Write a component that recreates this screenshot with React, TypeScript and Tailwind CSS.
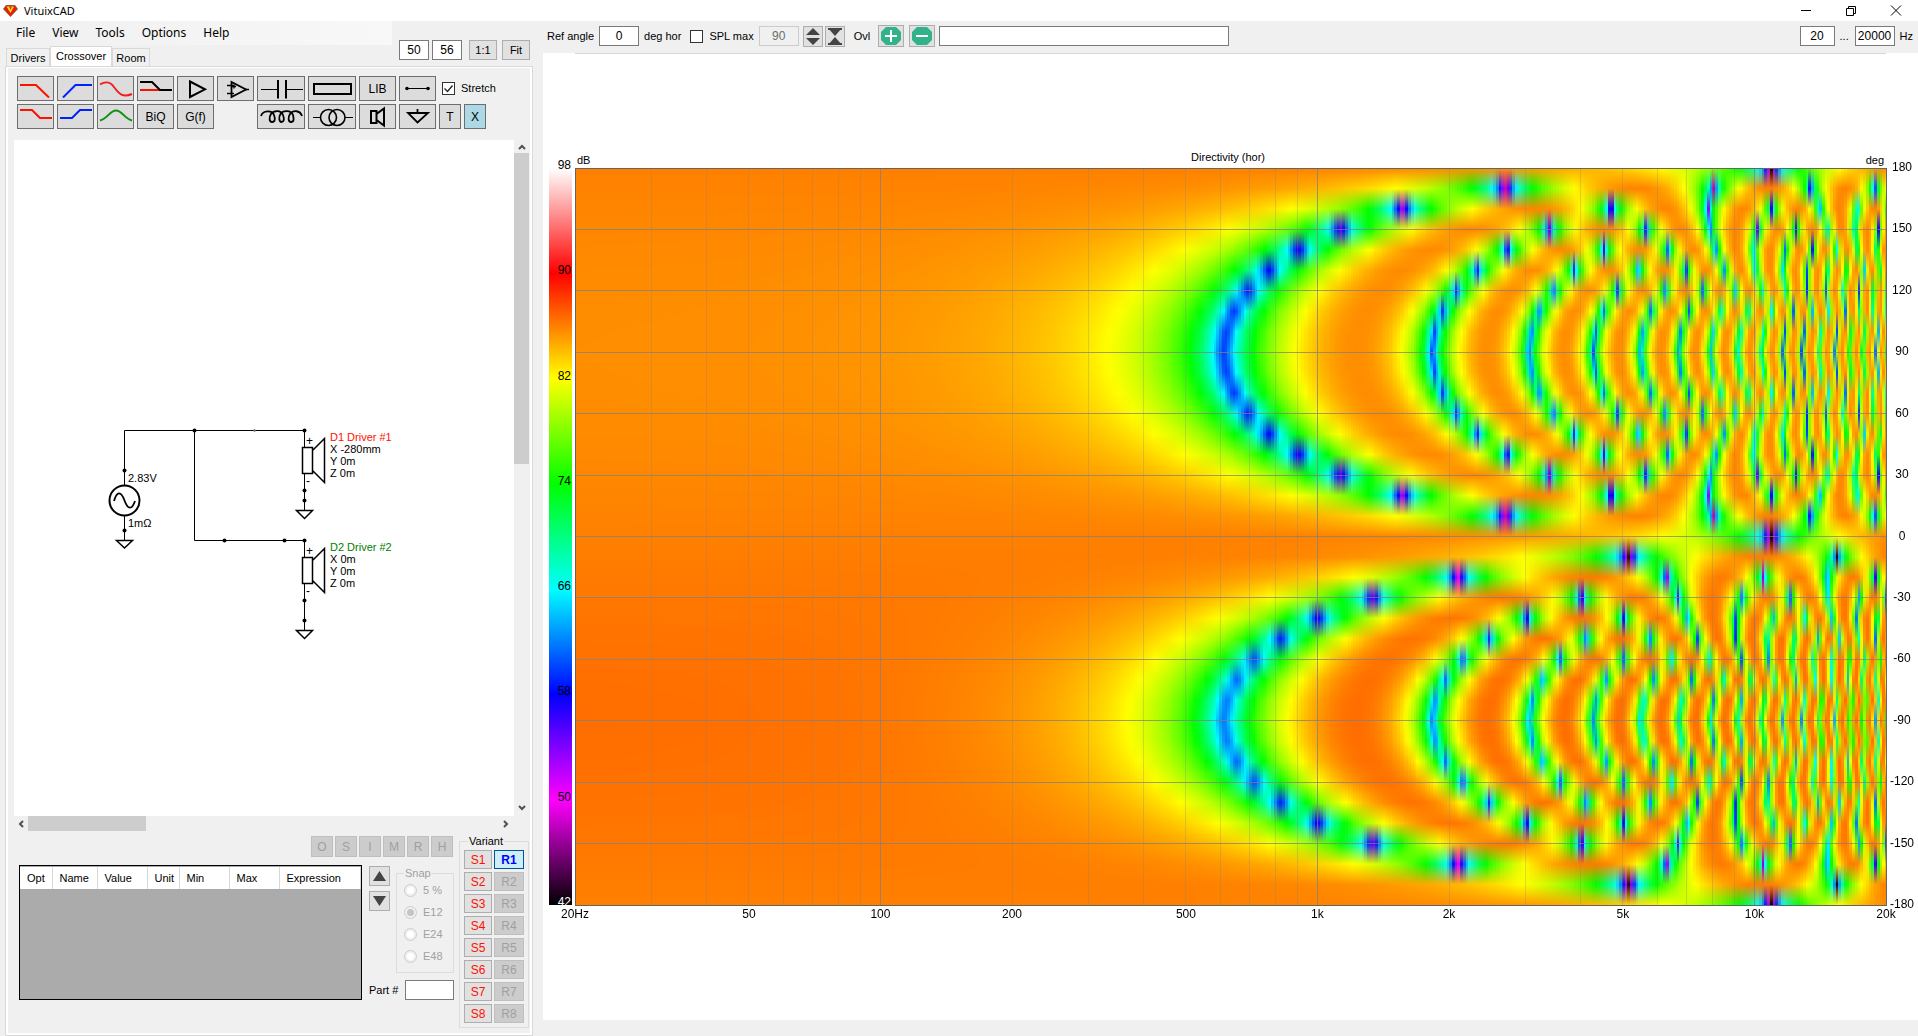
import { useEffect, useRef } from "react";
import type { ReactNode } from "react";
import clsx from "clsx";

const MIN_FREQ = 20;
const MAX_FREQ = 20000;
const STEPS_PER_OCTAVE = 48;
const ANGLE_STEP = 10;
const SPEED_OF_SOUND = 344;
const DISTANCE = 2.5;
const LEVEL_AT_DISTANCE = 80;
const DRIVER_POSITIONS = [-0.28, 0];

// 42 dB -> 98 dB, 8 dB between stops
const COLOR_STOPS = [
  [0, 0, 0],
  [255, 0, 255],
  [0, 0, 255],
  [0, 255, 255],
  [0, 255, 0],
  [255, 255, 0],
  [255, 0, 0],
  [255, 255, 255],
];

function levelToColor(level: number) {
  const position = Math.min(Math.max((level - 42) / 8, 0), 6.9999);
  const index = Math.floor(position);
  const ratio = position - index;
  return COLOR_STOPS[index].map(
    (channel, i) => channel + (COLOR_STOPS[index + 1][i] - channel) * ratio,
  );
}

function getLevel(freq: number, angle: number) {
  const rad = (angle * Math.PI) / 180;
  const x = DISTANCE * Math.sin(rad);
  const z = DISTANCE * Math.cos(rad);
  let re = 0;
  let im = 0;
  for (const position of DRIVER_POSITIONS) {
    const distance = Math.hypot(x - position, z);
    const phase = (2 * Math.PI * freq * distance) / SPEED_OF_SOUND;
    re += (DISTANCE / distance) * Math.cos(phase);
    im += (DISTANCE / distance) * Math.sin(phase);
  }
  return LEVEL_AT_DISTANCE + 20 * Math.log10(Math.hypot(re, im) + 1e-9);
}

function drawDirectivity(canvas: HTMLCanvasElement) {
  const width = canvas.clientWidth;
  const height = canvas.clientHeight;
  const context = canvas.getContext("2d");
  if (!context || !width || !height) return;
  canvas.width = width;
  canvas.height = height;

  const image = context.createImageData(width, height);
  const totalSteps = Math.log2(MAX_FREQ / MIN_FREQ) * STEPS_PER_OCTAVE;
  let lastStep = -1;
  let column: number[][] = [];

  for (let x = 0; x < width; x++) {
    const step = Math.ceil(((x + 0.5) / width) * totalSteps);
    if (step !== lastStep) {
      const freq = MIN_FREQ * 2 ** (step / STEPS_PER_OCTAVE);
      column = Array.from({ length: 360 / ANGLE_STEP + 1 }, (_, i) =>
        levelToColor(getLevel(freq, 180 - i * ANGLE_STEP)),
      );
      lastStep = step;
    }
    for (let y = 0; y < height; y++) {
      const row = ((y + 0.5) / height) * (column.length - 1);
      const index = Math.floor(row);
      const ratio = row - index;
      const offset = (y * width + x) * 4;
      for (let c = 0; c < 3; c++) {
        image.data[offset + c] =
          column[index][c] * (1 - ratio) + column[index + 1][c] * ratio;
      }
      image.data[offset + 3] = 255;
    }
  }
  context.putImageData(image, 0, 0);
}

const freqToPercent = (freq: number) =>
  `${(Math.log10(freq / MIN_FREQ) / Math.log10(MAX_FREQ / MIN_FREQ)) * 100}%`;
const angleToPercent = (angle: number) => `${((180 - angle) / 360) * 100}%`;

const FREQ_LINES = [10, 100, 1000, 10000]
  .flatMap((decade) => [1, 2, 3, 4, 5, 6, 7, 8, 9].map((n) => n * decade))
  .filter((freq) => freq > MIN_FREQ && freq < MAX_FREQ);
const ANGLES = [180, 150, 120, 90, 60, 30, 0, -30, -60, -90, -120, -150, -180];
const FREQ_LABELS: [number, string][] = [
  [20, "20Hz"],
  [50, "50"],
  [100, "100"],
  [200, "200"],
  [500, "500"],
  [1000, "1k"],
  [2000, "2k"],
  [5000, "5k"],
  [10000, "10k"],
  [20000, "20k"],
];
const LEVELS = [98, 90, 82, 74, 66, 58, 50, 42];

function DirectivityChart() {
  const canvasRef = useRef<HTMLCanvasElement>(null);

  useEffect(() => {
    const canvas = canvasRef.current;
    if (!canvas) return;
    const draw = () => drawDirectivity(canvas);
    draw();
    window.addEventListener("resize", draw);
    return () => window.removeEventListener("resize", draw);
  }, []);

  return (
    <section className="flex min-h-0 flex-1 flex-col bg-white pr-8 pb-[115px] pl-[6px]">
      <div className="ml-[26px] border-[#d8d8d8] border-t" />
      <div className="mt-[98px] ml-[26px] flex h-4 items-start justify-between px-[2px] leading-4">
        <span>dB</span>
        <h2 className="-mt-[3px]">Directivity (hor)</h2>
        <span>deg</span>
      </div>
      <div className="flex min-h-0 flex-1 gap-[3px]">
        <div className="w-[23px] bg-[linear-gradient(to_bottom,#fff,#f00,#ff0,#0f0,#0ff,#00f,#f0f,#000)]">
          <svg className="size-full overflow-visible">
            {LEVELS.map((level) => (
              <text
                key={level}
                x="22"
                y={`${((98 - level) / 56) * 100}%`}
                dy="1"
                textAnchor="end"
                className={clsx(
                  "text-[12px]",
                  level === 42 ? "fill-white" : "fill-black",
                )}
              >
                {level}
              </text>
            ))}
          </svg>
        </div>
        <div className="relative min-w-0 flex-1">
          <canvas ref={canvasRef} className="absolute inset-0 size-full" />
          <svg
            className="absolute inset-0 size-full overflow-visible"
            shapeRendering="crispEdges"
          >
            {FREQ_LINES.map((freq) => (
              <line
                key={freq}
                x1={freqToPercent(freq)}
                x2={freqToPercent(freq)}
                y1="0"
                y2="100%"
                stroke="#808080"
                strokeOpacity={[100, 1000, 10000].includes(freq) ? 0.75 : 0.28}
              />
            ))}
            {ANGLES.map((angle) => (
              <line
                key={angle}
                x1="0"
                x2="100%"
                y1={angleToPercent(angle)}
                y2={angleToPercent(angle)}
                stroke="#808080"
                strokeOpacity={0.75}
              />
            ))}
            <rect
              width="100%"
              height="100%"
              fill="none"
              stroke="#646464"
            />
            {FREQ_LABELS.map(([freq, label]) => (
              <text
                key={freq}
                x={freqToPercent(freq)}
                y="100%"
                dy="13"
                textAnchor="middle"
                className="text-[12px]"
              >
                {label}
              </text>
            ))}
            {ANGLES.map((angle) => (
              <text
                key={`label_${angle}`}
                x="100%"
                y={angleToPercent(angle)}
                dx="16"
                dy="3"
                textAnchor="middle"
                className="text-[12px]"
              >
                {angle}
              </text>
            ))}
          </svg>
        </div>
      </div>
    </section>
  );
}

type BoxProps = {
  label: string;
  value?: string;
  disabled?: boolean;
  className?: string;
};

function TextBox({ label, value = "", disabled, className }: BoxProps) {
  return (
    <input
      aria-label={label}
      defaultValue={value}
      disabled={disabled}
      className={clsx(
        "h-5 border px-0 text-center text-[12px]",
        disabled
          ? "border-[#cccccc] bg-[#f0f0f0] text-[#6d6d6d]"
          : "border-[#7a7a7a] bg-white",
        className,
      )}
    />
  );
}

function CheckBox({ label, checked }: { label: string; checked?: boolean }) {
  return (
    <label className="flex items-center gap-[6px]">
      <span className="relative size-[13px]">
        <input
          type="checkbox"
          defaultChecked={checked}
          className="peer block size-[13px] appearance-none border border-[#333333] bg-white"
        />
        <svg
          viewBox="0 0 13 13"
          className="pointer-events-none absolute inset-0 hidden size-[13px] peer-checked:block"
        >
          <path d="M2.5 6.5l3 3 5-6" fill="none" stroke="#222" strokeWidth="1.3" />
        </svg>
      </span>
      {label}
    </label>
  );
}

type ToolButtonProps = {
  label: string;
  wide?: boolean;
  narrow?: boolean;
  active?: boolean;
  children: ReactNode;
};

function ToolButton({ label, wide, narrow, active, children }: ToolButtonProps) {
  return (
    <button
      type="button"
      aria-label={label}
      className={clsx(
        "flex h-[25px] items-center justify-center border border-[#6e6e6e]",
        wide ? "w-12" : narrow ? "w-[22px]" : "w-[37px]",
        active ? "bg-[#add8e6]" : "bg-[#dcdcdc]",
      )}
    >
      {children}
    </button>
  );
}

type GlyphProps = { d: string; color?: string; stroke?: number; width?: number };

function Glyph({ d, color = "#000", stroke = 2, width = 37 }: GlyphProps) {
  return (
    <svg
      width={width - 2}
      height="23"
      viewBox={`1 1 ${width - 2} 23`}
      fill="none"
      stroke={color}
      strokeWidth={stroke}
    >
      <path d={d} />
    </svg>
  );
}

function CrossoverToolbar() {
  return (
    <div className="flex h-[72px] flex-col gap-[3px] pt-2 pl-[9px] text-[12px]">
      <div className="flex items-center gap-[3px]">
        <ToolButton label="Low pass">
          <Glyph d="M3 9H19L32 21.500" color="#f10" />
        </ToolButton>
        <ToolButton label="High pass">
          <Glyph d="M6 21.500L18.500 9H35" color="#02f" />
        </ToolButton>
        <ToolButton label="All pass">
          <Glyph d="M3 8.500C7 6 13 5 17 11C22 18 26 22 35 18" color="#f12020" />
        </ToolButton>
        <ToolButton label="Delay">
          <svg width="35" height="23" viewBox="1 1 35 23" fill="none" strokeWidth="2">
            <path d="M3 14H23" stroke="#f10" />
            <path d="M3 6H15L23 14H35" stroke="#000" />
          </svg>
        </ToolButton>
        <ToolButton label="Buffer">
          <Glyph d="M13 5.500V21L28 13.300Z" />
        </ToolButton>
        <ToolButton label="Op amp">
          <svg width="35" height="23" viewBox="1 1 35 23" fill="none" stroke="#000">
            <path d="M14.500 6V21L29 13.500Z" strokeWidth="1.800" />
            <path d="M10 9.500H17M10 17.500H17M28 13.500H32M15 10.500H19M17 8.500V12.500" strokeWidth="1.300" />
          </svg>
        </ToolButton>
        <ToolButton label="Capacitor" wide>
          <svg width="46" height="23" viewBox="1 1 46 23" fill="none" stroke="#000">
            <path d="M4 13.500H21M29 13.500H46" />
            <path d="M21 4V22.500M29 4V22.500" strokeWidth="2" />
          </svg>
        </ToolButton>
        <ToolButton label="Resistor" wide>
          <Glyph d="M6 8H43V18H6Z" width={48} />
        </ToolButton>
        <ToolButton label="Library">LIB</ToolButton>
        <ToolButton label="Wire">
          <svg width="35" height="23" viewBox="1 1 35 23">
            <path d="M8 12.500H29" stroke="#000" />
            <circle cx="8" cy="12.500" r="1.800" />
            <circle cx="29" cy="12.500" r="1.800" />
          </svg>
        </ToolButton>
        <div className="pl-[3px] text-[11px]">
          <CheckBox label="Stretch" checked />
        </div>
      </div>
      <div className="flex items-center gap-[3px]">
        <ToolButton label="Low shelf">
          <Glyph d="M3 6H15L23 14H35" color="#f10" />
        </ToolButton>
        <ToolButton label="High shelf">
          <Glyph d="M3 14H15L23 6H35" color="#02f" />
        </ToolButton>
        <ToolButton label="Peak">
          <Glyph d="M3 16.500C10 15 13 6.500 19 6.500C25 6.500 28 15 35 16.500" color="#129012" />
        </ToolButton>
        <ToolButton label="Biquad">BiQ</ToolButton>
        <ToolButton label="Transfer function">G(f)</ToolButton>
        <div className="ml-10">
          <ToolButton label="Inductor" wide>
            <Glyph
              width={48}
              stroke={1.8}
              d="M4 12C6 6 15 6 17 11C18.500 15 18 18 15 18C12 18 12 13 14 10C17 6 24 6 26 11C27.500 15 27 18 24.500 18C22 18 21.500 13 23.500 10C26 6 34 6 36 11C37 15 37 18 34 18C31 18 31 13 33 10C36 6 43 6 45 12"
            />
          </ToolButton>
        </div>
        <ToolButton label="Transformer" wide>
          <svg width="46" height="23" viewBox="1 1 46 23" fill="none" stroke="#000">
            <path d="M5 13.500H12M37 13.500H45" />
            <circle cx="20.500" cy="13.500" r="8" strokeWidth="1.600" />
            <circle cx="29" cy="13.500" r="8" strokeWidth="1.600" />
          </svg>
        </ToolButton>
        <ToolButton label="Driver">
          <Glyph d="M12 7H17.500V19H12ZM17.500 10L25 4.500V21.500L17.500 16" />
        </ToolButton>
        <ToolButton label="Ground">
          <Glyph d="M9 9H29L18.500 18.500ZM18.500 5V9" stroke={1.8} />
        </ToolButton>
        <ToolButton label="Text" narrow>
          T
        </ToolButton>
        <ToolButton label="Delete" narrow active>
          X
        </ToolButton>
      </div>
    </div>
  );
}

type DriverSymbolProps = {
  y: number;
  groundY: number;
  dots: number[];
  name: string;
  x: string;
  color: string;
};

function DriverSymbol({ y, groundY, dots, name, x, color }: DriverSymbolProps) {
  return (
    <g>
      <path
        d={`M304.500 ${y}V${y + 17}M304.500 ${y + 43}V${groundY}`}
        stroke="#000"
      />
      <path
        d={`M302.500 ${y + 17}H312.500V${y + 43}H302.500ZM312.500 ${y + 20}L324.500 ${y + 8}V${y + 52}L312.500 ${y + 40}`}
        fill="none"
        stroke="#000"
        strokeWidth="1.500"
      />
      {dots.map((dot) => (
        <circle key={dot} cx="304.500" cy={dot} r="2" />
      ))}
      <path
        d={`M296.500 ${groundY}H312.500L304.500 ${groundY + 8}Z`}
        fill="#fff"
        stroke="#000"
        strokeWidth="1.500"
      />
      <text x="306" y={y + 14} className="text-[12px]">
        +
      </text>
      <text x="306" y={y + 54} className="text-[12px]">
        -
      </text>
      <text x="330" y={y + 10} fill={color}>
        {name}
      </text>
      <text x="330" y={y + 22}>
        X {x}
      </text>
      <text x="330" y={y + 34}>
        Y 0m
      </text>
      <text x="330" y={y + 46}>
        Z 0m
      </text>
    </g>
  );
}

function Schematic() {
  return (
    <svg className="block size-full bg-white text-[11px]">
      <g transform="translate(-14 -140)">
        <path
          d="M124.500 486V430.500H304.500M194.500 430.500V540.500H304.500M124.500 516V540"
          fill="none"
          stroke="#000"
        />
        {[
          [124.5, 470.5],
          [124.5, 530.5],
          [194.5, 430.5],
          [224.5, 540.5],
          [284.5, 540.5],
        ].map(([x, y]) => (
          <circle key={`${x}_${y}`} cx={x} cy={y} r="2" />
        ))}
        <circle cx="254.500" cy="430.500" r="1.200" fill="#666" />
        <circle
          cx="124.500"
          cy="500.500"
          r="15"
          fill="#fff"
          stroke="#000"
          strokeWidth="2"
        />
        <path
          d="M114 501C117 491 121 491 124.500 500.500C128 510 132 510 135 501"
          fill="none"
          stroke="#000"
          strokeWidth="1.800"
        />
        <path
          d="M116.500 540.500H132.500L124.500 548Z"
          fill="#fff"
          stroke="#000"
          strokeWidth="1.500"
        />
        <text x="128" y="482">
          2.83V
        </text>
        <text x="128" y="527">
          1mΩ
        </text>
        <DriverSymbol
          y={430.5}
          groundY={510.5}
          dots={[430.5, 490.5, 500.5]}
          name="D1 Driver #1"
          x="-280mm"
          color="#f10"
        />
        <DriverSymbol
          y={540.5}
          groundY={630.5}
          dots={[540.5, 600.5, 620.5]}
          name="D2 Driver #2"
          x="0m"
          color="#008000"
        />
      </g>
    </svg>
  );
}

function Chevron({ d }: { d: string }) {
  return (
    <svg width="8" height="8" viewBox="0 0 8 8" fill="none" stroke="#505050" strokeWidth="2">
      <path d={d} />
    </svg>
  );
}

function SchematicView() {
  return (
    <div className="flex min-h-0 flex-1 flex-col pl-[6px]">
      <div className="flex min-h-0 flex-1">
        <div className="min-w-0 flex-1">
          <Schematic />
        </div>
        <div className="flex w-4 flex-col">
          <button type="button" aria-label="Scroll up" className="flex h-[13px] items-center justify-center">
            <Chevron d="M1 6l3-3 3 3" />
          </button>
          <div className="min-h-0 flex-1">
            <div className="h-[48%] w-[15px] bg-[#cdcdcd]" />
          </div>
          <button type="button" aria-label="Scroll down" className="flex h-4 items-center justify-center">
            <Chevron d="M1 2l3 3 3-3" />
          </button>
        </div>
      </div>
      <div className="mr-4 flex h-4">
        <button type="button" aria-label="Scroll left" className="flex w-[14px] items-center justify-center">
          <Chevron d="M6 1l-3 3 3 3" />
        </button>
        <div className="flex-1">
          <div className="h-[15px] w-1/4 bg-[#cdcdcd]" />
        </div>
        <button type="button" aria-label="Scroll right" className="flex w-4 items-center justify-center">
          <Chevron d="M2 1l3 3-3 3" />
        </button>
      </div>
    </div>
  );
}

const COLUMNS = [
  { name: "Opt", width: "w-8" },
  { name: "Name", width: "w-[45px]" },
  { name: "Value", width: "w-[50px]" },
  { name: "Unit", width: "w-8" },
  { name: "Min", width: "w-[50px]" },
  { name: "Max", width: "w-[50px]" },
  { name: "Expression", width: "w-auto" },
];

function PartsPanel() {
  return (
    <div className="flex h-[201px] text-[12px]">
      <div className="flex min-w-0 flex-1 flex-col pt-1 pl-[11px]">
        <div className="mr-px flex h-[21px] justify-end gap-[2px]">
          {["O", "S", "I", "M", "R", "H"].map((name) => (
            <button
              key={name}
              type="button"
              disabled
              className="w-[22px] border border-[#bfbfbf] bg-[#cccccc] text-[#a0a0a0]"
            >
              {name}
            </button>
          ))}
        </div>
        <div className="mt-2 flex">
          <div className="mr-[7px] h-[135px] min-w-0 flex-1 border border-black bg-[#ababab] pt-px">
            <table className="w-full table-fixed text-[11px]">
              <thead>
                <tr className="h-[22px] bg-white">
                  {COLUMNS.map(({ name, width }) => (
                    <th
                      key={name}
                      className={clsx(
                        "border-[#d8d8d8] border-r pl-[7px] text-left font-normal",
                        width,
                      )}
                    >
                      {name}
                    </th>
                  ))}
                </tr>
              </thead>
            </table>
          </div>
          <div className="flex w-[85px] flex-col justify-between">
            <div className="flex gap-[6px]">
              <div className="flex flex-col gap-[5px] pt-px">
                <button type="button" aria-label="Move up" className="flex h-5 w-[21px] items-center justify-center border border-[#adadad] bg-[#e1e1e1]">
                  <svg width="13" height="10"><path d="M6.500 0L13 10H0Z" fill="#444" /></svg>
                </button>
                <button type="button" aria-label="Move down" className="flex h-5 w-[21px] items-center justify-center border border-[#adadad] bg-[#e1e1e1]">
                  <svg width="13" height="10"><path d="M6.500 10L13 0H0Z" fill="#444" /></svg>
                </button>
              </div>
              <fieldset disabled className="h-[108px] w-[58px] border border-[#dcdcdc] pl-[7px] text-[11px] text-[#a0a0a0]">
                <legend className="px-px leading-4">Snap</legend>
                <div className="flex flex-col gap-[6px] pt-px">
                  {["5 %", "E12", "E24", "E48"].map((name) => (
                    <label key={name} className="flex h-4 items-center gap-[6px]">
                      <input
                        type="radio"
                        name="snap"
                        defaultChecked={name === "E12"}
                        className="size-[13px] appearance-none rounded-full border border-[#cccccc] bg-white bg-clip-content p-[2px] checked:bg-[#c4c4c4]"
                      />
                      {name}
                    </label>
                  ))}
                </div>
              </fieldset>
            </div>
            <label className="flex h-5 items-center justify-between text-[11px]">
              Part #
              <input className="h-5 w-[49px] border border-[#7a7a7a] bg-white" />
            </label>
          </div>
        </div>
      </div>
      <fieldset className="mt-px mr-px ml-[5px] h-[195px] w-[70px] border border-[#dcdcdc] pl-1">
        <legend className="ml-1 px-px text-[11px] leading-4">Variant</legend>
        <div className="grid grid-cols-[28px_30px] gap-x-[2px] gap-y-[3px] pt-px">
          {[1, 2, 3, 4, 5, 6, 7, 8].map((n) => (
            <div key={n} className="contents">
              <button type="button" className="h-[19px] border border-[#adadad] bg-[#e1e1e1] text-[#f10]">
                S{n}
              </button>
              <button
                type="button"
                disabled={n > 1}
                className={clsx(
                  "h-[19px] border",
                  n === 1
                    ? "border-[#005499] bg-[#cceef8] font-bold text-[#0000ff]"
                    : "border-[#bfbfbf] bg-[#cccccc] text-[#a0a0a0]",
                )}
              >
                R{n}
              </button>
            </div>
          ))}
        </div>
      </fieldset>
    </div>
  );
}

function LeftHeader() {
  return (
    <div className="flex h-[45px] justify-between">
      <div className="flex flex-1 flex-col justify-between">
        <nav className="flex h-6 gap-[17px] bg-linear-to-r from-[#f0f0f0] to-[#f8f8f8] pl-4 font-[Noto_Sans,sans-serif] text-[12px] leading-6">
          {["File", "View", "Tools", "Options", "Help"].map((name) => (
            <button key={name} type="button">
              {name}
            </button>
          ))}
        </nav>
        <div role="tablist" className="-mb-px flex items-end pl-[6px]">
          <button type="button" role="tab" className="h-[19px] w-11 border border-[#d9d9d9] pt-px">
            Drivers
          </button>
          <button
            type="button"
            role="tab"
            aria-selected="true"
            className="h-[21px] w-[62px] border border-[#d9d9d9] border-b-0 bg-white pb-px"
          >
            Crossover
          </button>
          <button type="button" role="tab" className="h-[19px] w-[38px] border border-[#d9d9d9] pt-px">
            Room
          </button>
        </div>
      </div>
      <div className="mb-[6px] flex h-5 w-[143px] self-end pl-[7px]">
        <TextBox label="Rows" value="50" className="w-[30px]" />
        <TextBox label="Columns" value="56" className="ml-[3px] w-[30px]" />
        <button type="button" className="ml-[7px] w-7 border border-[#adadad] bg-[#e1e1e1]">
          1:1
        </button>
        <button type="button" className="ml-[5px] w-7 border border-[#adadad] bg-[#e1e1e1]">
          Fit
        </button>
      </div>
    </div>
  );
}

function OverlayButton({ label, d }: { label: string; d: string }) {
  return (
    <button type="button" aria-label={label} className="flex h-[22px] w-[26px] items-center justify-center border border-[#adadad] bg-[#e1e1e1]">
      <svg width="20" height="18" viewBox="0 0 20 18">
        <path d="M5 0H15L20 5V13L15 18H5L0 13V5Z" fill="#32b28a" />
        <path d={d} stroke="#fff" strokeWidth="2" />
      </svg>
    </button>
  );
}

function ChartToolbar() {
  return (
    <div className="flex h-8 items-center pr-[5px] pb-[2px] pl-1">
      <label className="flex items-center gap-[5px]">
        Ref angle
        <TextBox label="Ref angle" value="0" className="w-10" />
      </label>
      <span className="ml-[5px]">deg hor</span>
      <div className="ml-[9px]">
        <CheckBox label="SPL max" />
      </div>
      <TextBox label="SPL max value" value="90" disabled className="ml-[5px] w-10" />
      <button type="button" aria-label="Expand" className="ml-1 flex h-[21px] w-5 items-center justify-center border border-[#adadad] bg-[#e1e1e1]">
        <svg width="14" height="17"><path d="M7 0L14 7H0ZM7 17L0 10H14Z" fill="#444" /></svg>
      </button>
      <button type="button" aria-label="Collapse" className="ml-[2px] flex h-[21px] w-5 items-center justify-center border border-[#adadad] bg-[#e1e1e1]">
        <svg width="14" height="17"><path d="M0 0H14L7 8ZM0 17L7 9L14 17ZM0 0H14V2H0ZM0 15H14V17H0Z" fill="#444" /></svg>
      </button>
      <span className="mr-2 ml-[9px]">Ovl</span>
      <OverlayButton label="Add overlay" d="M10 3V15M4 9H16" />
      <div className="ml-[5px]">
        <OverlayButton label="Remove overlay" d="M4 9H16" />
      </div>
      <input aria-label="Overlay name" className="ml-1 h-5 w-[290px] border border-[#7a7a7a] bg-white" />
      <div className="ml-auto flex items-center gap-[5px]">
        <TextBox label="Minimum frequency" value="20" className="w-[35px]" />
        <span className="w-[10px]">...</span>
        <TextBox label="Maximum frequency" value="20000" className="w-10" />
        <span>Hz</span>
      </div>
    </div>
  );
}

function TitleBar() {
  return (
    <header className="flex h-[21px] items-center bg-white pl-[3px]">
      <svg width="15" height="12" viewBox="0 0 15 12">
        <path d="M3 0H12L15 4L7.500 12L0 4Z" fill="#8f5a28" />
        <path d="M3.500 1H11.500L13.500 4L7.500 11L1.500 4Z" fill="#f01800" />
        <path d="M3.500 1.500H11L7.500 8Z" fill="#ffe030" />
        <path d="M6 1.500H9L7.500 5Z" fill="#e03000" />
      </svg>
      <h1 className="ml-[6px] font-[Noto_Sans,sans-serif] text-[11px] leading-5">
        VituixCAD
      </h1>
      <div className="ml-auto flex h-4 items-center">
        {[
          ["Minimize", "M1 6.500H11"],
          ["Restore", "M1.500 4.500H8.500V11.500H1.500ZM3.500 4V2.500H10.500V9.500H9"],
          ["Close", "M1 1.500L11 11.500M11 1.500L1 11.500"],
        ].map(([name, d]) => (
          <button key={name} type="button" aria-label={name} className="flex w-[45px] justify-center">
            <svg width="12" height="13" fill="none" stroke="#000">
              <path d={d} />
            </svg>
          </button>
        ))}
      </div>
    </header>
  );
}

export default function App() {
  return (
    <div className="flex h-screen flex-col bg-[#f0f0f0] font-[Liberation_Sans,Arial,sans-serif] text-[11px] text-black">
      <TitleBar />
      <div className="flex min-h-0 flex-1">
        <aside className="flex w-[543px] shrink-0 flex-col">
          <div className="w-[535px]">
            <LeftHeader />
          </div>
          <div className="mr-[10px] ml-[5px] flex min-h-0 flex-1 flex-col border border-[#d9d9d9] bg-white p-[2px] pt-px">
            <div className="flex min-h-0 flex-1 flex-col bg-[#f0f0f0]">
              <CrossoverToolbar />
              <SchematicView />
              <PartsPanel />
            </div>
          </div>
        </aside>
        <main className="mb-4 flex min-w-0 flex-1 flex-col">
          <ChartToolbar />
          <DirectivityChart />
        </main>
      </div>
    </div>
  );
}
